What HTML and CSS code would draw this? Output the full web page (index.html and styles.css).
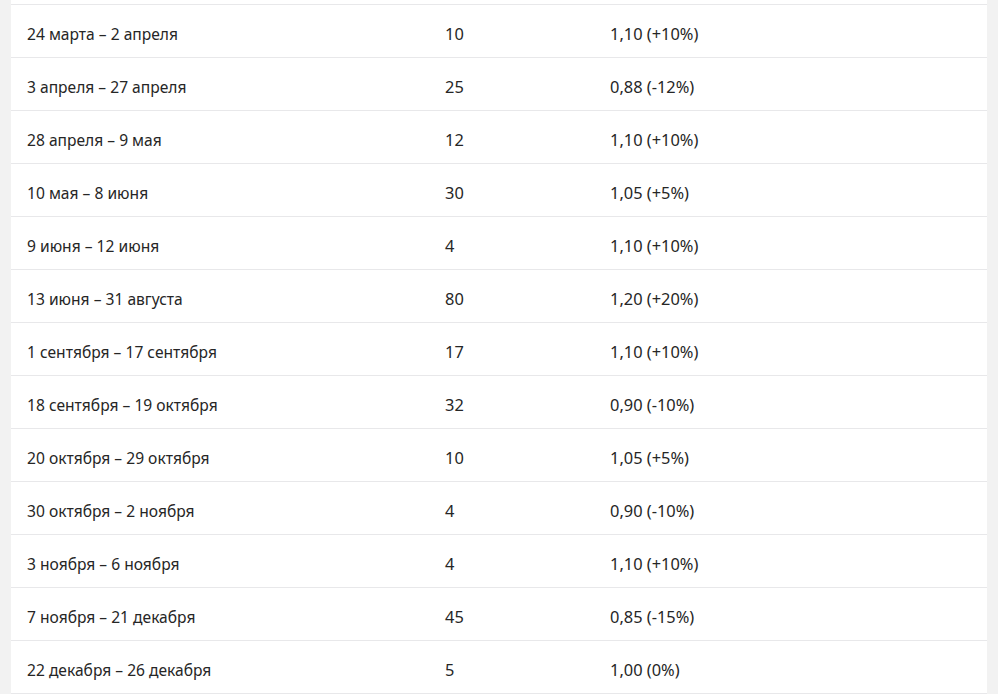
FILE: index.html
```html
<!DOCTYPE html>
<html lang="ru">
<head>
<meta charset="utf-8">
<link rel="stylesheet" href="styles.css">
</head>
<body>
<div class="table">
  <div class="row"><span>24 марта – 2 апреля</span><span class="num">10</span><span class="num">1,10 (+10%)</span></div>
  <div class="row"><span>3 апреля – 27 апреля</span><span class="num">25</span><span class="num">0,88 (-12%)</span></div>
  <div class="row"><span>28 апреля – 9 мая</span><span class="num">12</span><span class="num">1,10 (+10%)</span></div>
  <div class="row"><span>10 мая – 8 июня</span><span class="num">30</span><span class="num">1,05 (+5%)</span></div>
  <div class="row"><span>9 июня – 12 июня</span><span class="num">4</span><span class="num">1,10 (+10%)</span></div>
  <div class="row"><span>13 июня – 31 августа</span><span class="num">80</span><span class="num">1,20 (+20%)</span></div>
  <div class="row"><span>1 сентября – 17 сентября</span><span class="num">17</span><span class="num">1,10 (+10%)</span></div>
  <div class="row"><span>18 сентября – 19 октября</span><span class="num">32</span><span class="num">0,90 (-10%)</span></div>
  <div class="row"><span>20 октября – 29 октября</span><span class="num">10</span><span class="num">1,05 (+5%)</span></div>
  <div class="row"><span>30 октября – 2 ноября</span><span class="num">4</span><span class="num">0,90 (-10%)</span></div>
  <div class="row"><span>3 ноября – 6 ноября</span><span class="num">4</span><span class="num">1,10 (+10%)</span></div>
  <div class="row"><span>7 ноября – 21 декабря</span><span class="num">45</span><span class="num">0,85 (-15%)</span></div>
  <div class="row last"><span>22 декабря – 26 декабря</span><span class="num">5</span><span class="num">1,00 (0%)</span></div>
</div>
</body>
</html>
```
FILE: styles.css
```css
html, body {
  margin: 0;
  padding: 0;
  background: #f2f2f2;
  overflow: hidden;
}
body {
  font-family: "Noto Sans", Roboto, sans-serif;
  font-size: 15.6px;
  color: #262626;
}
.table {
  margin-left: 11px;
  width: 976px;
  background: #fff;
  padding-top: 4px;
}
.row {
  display: grid;
  grid-template-columns: 418px 165px 1fr;
  padding: 0 16px;
  height: 52px;
  line-height: 58px;
  border-top: 1px solid #e8e8ea;
  overflow: hidden;
}
.row.last {
  border-bottom: 1px solid #e8e8ea;
}
.num {
  font-size: 16.4px;
}
```
